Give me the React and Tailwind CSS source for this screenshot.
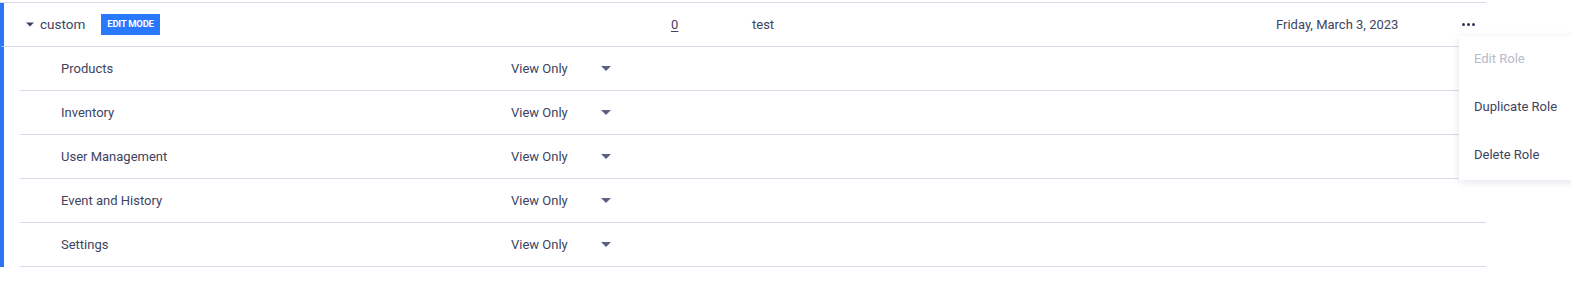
import React from "react";

const permissions = ["Products", "Inventory", "User Management", "Event and History", "Settings"];

const Caret = ({ className }) => (
    <svg className={className} viewBox="0 0 10 5" fill="currentColor">
        <path d="M0 0 L10 0 L5 5 Z" />
    </svg>
);

const App = () => {
    return (
        <div className="relative w-[1571px] h-[291px] bg-white text-[13px] text-[#3d4461]" style={{ fontFamily: "Roboto, 'Liberation Sans', sans-serif" }}>
            <div className="w-[1486px] mt-[2px] border-t border-[#d6dae8]">
                {/* role row */}
                <div className="flex items-center h-[44px] border-l-4 border-l-[#2a76f6] border-b border-b-[#d6dae8] pl-[22px]">
                    <div className="flex items-center w-[645px]">
                        <Caret className="w-[8px] h-[5px] text-[#3d4461] mr-[6px]" />
                        <span className="text-[13.5px]">custom</span>
                        <span className="ml-[16px] h-[21px] px-[6px] flex items-center bg-[#2979ff] text-white text-[9.5px] font-bold tracking-tight">EDIT MODE</span>
                    </div>
                    <div className="w-[81px] underline underline-offset-2">0</div>
                    <div className="w-[524px]">test</div>
                    <div className="w-[186px]">Friday, March 3, 2023</div>
                    <div className="flex gap-[2px] items-center">
                        <span className="w-[3px] h-[3px] rounded-full bg-[#2d3659]" />
                        <span className="w-[3px] h-[3px] rounded-full bg-[#2d3659]" />
                        <span className="w-[3px] h-[3px] rounded-full bg-[#2d3659]" />
                    </div>
                </div>
                {/* permission rows */}
                <div className="border-l-4 border-l-[#2a76f6] pl-[16px]">
                    {permissions.map((item) => (
                        <div key={item} className="flex items-center h-[44px] border-b border-[#d6dae8]">
                            <div className="w-[491px] pl-[41px]">{item}</div>
                            <div className="w-[90px]">View Only</div>
                            <Caret className="w-[10px] h-[5px] text-[#5b6382]" />
                        </div>
                    ))}
                </div>
            </div>

            {/* actions menu */}
            <div className="absolute left-[1459px] top-[34px] w-[140px] bg-white shadow-[0_2px_8px_rgba(40,50,90,0.12)]">
                <div className="h-[48px] flex items-center pl-[15px] pb-[3px] text-[#b6bacb]">Edit Role</div>
                <div className="h-[48px] flex items-center pl-[15px] pb-[3px]">Duplicate Role</div>
                <div className="h-[48px] flex items-center pl-[15px] pb-[3px]">Delete Role</div>
            </div>
        </div>
    );
};

export default App;
